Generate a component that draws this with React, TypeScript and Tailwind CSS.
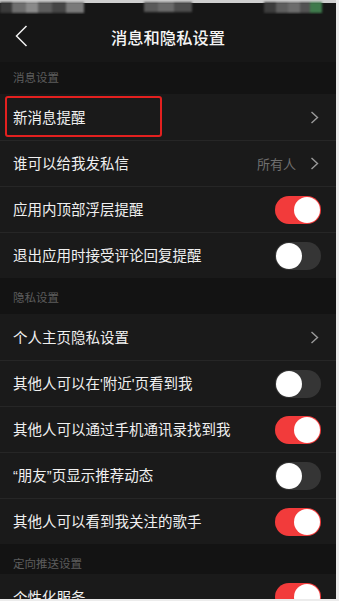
import React from 'react';

type Row =
  | { label: React.ReactNode; key: string; kind: 'link'; value?: string; highlight?: boolean }
  | { label: React.ReactNode; key: string; kind: 'toggle'; on: boolean };

const Q = ({ c }: { c: string }) => (
  <span style={{ fontFamily: '"Liberation Sans", sans-serif' }}>{c}</span>
);

const sections: { title: string; head: string; rows: Row[] }[] = [
  {
    title: '消息设置',
    head: 'h-[32px] pt-[10px]',
    rows: [
      { key: 'a', label: '新消息提醒', kind: 'link', highlight: true },
      { key: 'b', label: '谁可以给我发私信', kind: 'link', value: '所有人' },
      { key: 'c', label: '应用内顶部浮层提醒', kind: 'toggle', on: true },
      { key: 'd', label: '退出应用时接受评论回复提醒', kind: 'toggle', on: false },
    ],
  },
  {
    title: '隐私设置',
    head: 'h-[36px] pt-[14px]',
    rows: [
      { key: 'e', label: '个人主页隐私设置', kind: 'link' },
      {
        key: 'f',
        label: (
          <>
            其他人可以在<Q c="'" />附近<Q c="'" />页看到我
          </>
        ),
        kind: 'toggle',
        on: false,
      },
      { key: 'g', label: '其他人可以通过手机通讯录找到我', kind: 'toggle', on: true },
      {
        key: 'h',
        label: (
          <>
            <Q c="“" />朋友<Q c="”" />页显示推荐动态
          </>
        ),
        kind: 'toggle',
        on: false,
      },
      { key: 'i', label: '其他人可以看到我关注的歌手', kind: 'toggle', on: true },
    ],
  },
  {
    title: '定向推送设置',
    head: 'h-[30px] pt-[14px]',
    rows: [{ key: 'j', label: '个性化服务', kind: 'toggle', on: true }],
  },
];

const Chevron = () => (
  <svg width="9" height="13" viewBox="0 0 9 13" fill="none">
    <path d="M1.5 1 L7.5 6.5 L1.5 12" stroke="#9a9a9a" strokeWidth="1.4" />
  </svg>
);

const Toggle = ({ on }: { on: boolean }) => (
  <div
    className={`relative w-[46px] h-[28px] rounded-full ${on ? 'bg-[#f23b3b]' : 'bg-[#353535]'}`}
  >
    <div
      className={`absolute top-[1px] w-[26px] h-[26px] rounded-full bg-white ${on ? 'right-[1px]' : 'left-[1px]'}`}
    />
  </div>
);

const App = () => {
  return (
    <div className="w-[339px] h-[601px] bg-[#ececec] pr-[3px] pb-[2px] overflow-hidden">
      <div
        className="h-full overflow-hidden bg-[#131313] text-white"
        style={{ fontFamily: '"Noto Sans CJK SC", "Noto Sans", sans-serif' }}
      >
        {/* Status bar (blurred in the source) */}
        <div className="relative h-[14px] bg-[#171717] overflow-hidden">
          <div className="absolute inset-x-0 top-0 h-[3px] bg-[#cfcfcf]" />
          <div className="absolute left-0 top-[2px] flex h-[11px] blur-[1px]">
            <div className="w-[12px] bg-[#3a3a3a]" />
            <div className="w-[14px] bg-[#6e6e6e]" />
            <div className="w-[12px] bg-[#8a8a8a]" />
            <div className="w-[14px] bg-[#5c5c5c]" />
            <div className="w-[14px] bg-[#454545]" />
            <div className="w-[18px] bg-[#7a7a7a]" />
          </div>
          <div className="absolute left-[144px] top-[2px] flex h-[10px] blur-[1px]">
            <div className="w-[14px] bg-[#5a5a5a]" />
            <div className="w-[16px] bg-[#6a6a6a]" />
            <div className="w-[18px] bg-[#4e4e4e]" />
          </div>
          <div className="absolute left-[264px] top-[2px] flex h-[11px] blur-[1px]">
            <div className="w-[12px] bg-[#3c3c3c]" />
            <div className="w-[12px] bg-[#5e5e5e]" />
            <div className="w-[12px] bg-[#6c6c6c]" />
            <div className="w-[10px] bg-[#525252]" />
            <div className="w-[12px] bg-[#3f7a4c]" />
          </div>
        </div>

        {/* Nav bar */}
        <div className="relative h-[48px] bg-[#171717] flex items-center justify-center">
          <svg
            className="absolute left-[15px] top-[11px]"
            width="13"
            height="22"
            viewBox="0 0 13 22"
            fill="none"
          >
            <path d="M11.5 1 L1.5 11 L11.5 21" stroke="#f0f0f0" strokeWidth="1.5" />
          </svg>
          <span className="text-[16.3px] font-medium text-[#f5f5f5] -mt-[2px]">
            消息和隐私设置
          </span>
        </div>

        {sections.map((s) => (
          <div key={s.title}>
            <div className={`${s.head} px-[13px] text-[11.5px] leading-none text-[#5d5d5d] bg-[#131313]`}>
              {s.title}
            </div>
            <div className="bg-[#1a1a1a]">
              {s.rows.map((r, i) => (
                <div
                  key={r.key}
                  className={`relative h-[46px] flex items-center pl-[13px] pr-[15px] ${
                    i > 0 ? 'border-t border-[#262626]' : ''
                  }`}
                >
                  {r.kind === 'link' && r.highlight && (
                    <div className="absolute left-[5px] top-[2px] w-[157px] h-[41px] border-2 border-[#e3201f] rounded-[3px]" />
                  )}
                  <span className="flex-1 text-[14.5px] text-[#f0f0f0] leading-none">{r.label}</span>
                  {r.kind === 'link' ? (
                    <div className="flex items-center gap-[14px] pr-[2px]">
                      {r.value && (
                        <span className="text-[13px] text-[#6f6f6f] leading-none">{r.value}</span>
                      )}
                      <Chevron />
                    </div>
                  ) : (
                    <Toggle on={r.on} />
                  )}
                </div>
              ))}
            </div>
          </div>
        ))}
      </div>
    </div>
  );
};

export default App;
